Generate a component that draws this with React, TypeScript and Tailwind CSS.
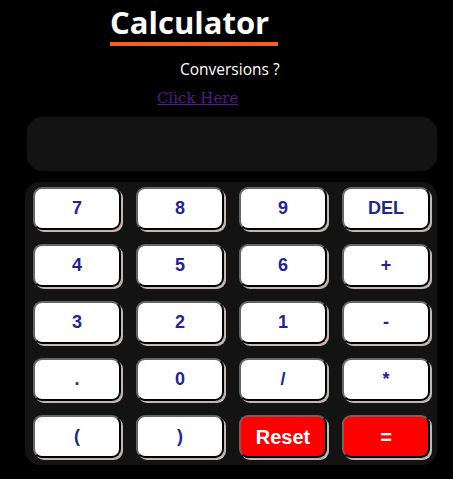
const keys: { label: string; red?: boolean }[] = [
  { label: "7" }, { label: "8" }, { label: "9" }, { label: "DEL" },
  { label: "4" }, { label: "5" }, { label: "6" }, { label: "+" },
  { label: "3" }, { label: "2" }, { label: "1" }, { label: "-" },
  { label: "." }, { label: "0" }, { label: "/" }, { label: "*" },
  { label: "(" }, { label: ")" }, { label: "Reset", red: true }, { label: "=", red: true },
]

export default function App() {
  return (
    <div className="min-h-[479px] w-[453px] bg-black">
      {/* Header */}
      <div className="pt-[3px] pl-[110px]">
        <h1 className="w-[168px] border-b-4 border-[#f2611d] pb-[1px] font-['Open_Sans',sans-serif] text-[31px] font-bold leading-[38px] text-white">
          Calculator
        </h1>
      </div>
      <p className="mt-[13px] pl-[180px] font-['Open_Sans',sans-serif] text-[15.5px] leading-[20px] text-white">
        Conversions ?
      </p>
      <a href="#" className="mt-[9px] ml-[157px] block w-fit font-['DejaVu_Serif',serif] text-[15px] leading-[20px] text-[#551a8b] underline">
        Click Here
      </a>

      {/* Display */}
      <div className="mt-[9px] ml-[27px] h-[54px] w-[410px] rounded-[15px] bg-[#131313]" />

      {/* Keypad */}
      <div className="mt-[11px] ml-[25px] grid w-[412px] grid-cols-[repeat(4,88px)] gap-x-[15px] gap-y-[14px] rounded-[15px] bg-[#131313] pt-[5px] pr-[6px] pb-[7px] pl-[8px]">
        {keys.map((k) => (
          <button
            key={k.label}
            className={`h-[43px] rounded-[9px] border-2 border-t-[#666] border-l-[#666] border-r-black border-b-black shadow-[2px_2px_0_#c4b6b4] font-['Liberation_Sans',Arial,sans-serif] font-bold ${
              k.red ? "bg-[#ff0000] text-[20px] text-white" : "bg-white text-[18px] text-[#24248c]"
            }`}
          >
            {k.label}
          </button>
        ))}
      </div>
    </div>
  )
}
